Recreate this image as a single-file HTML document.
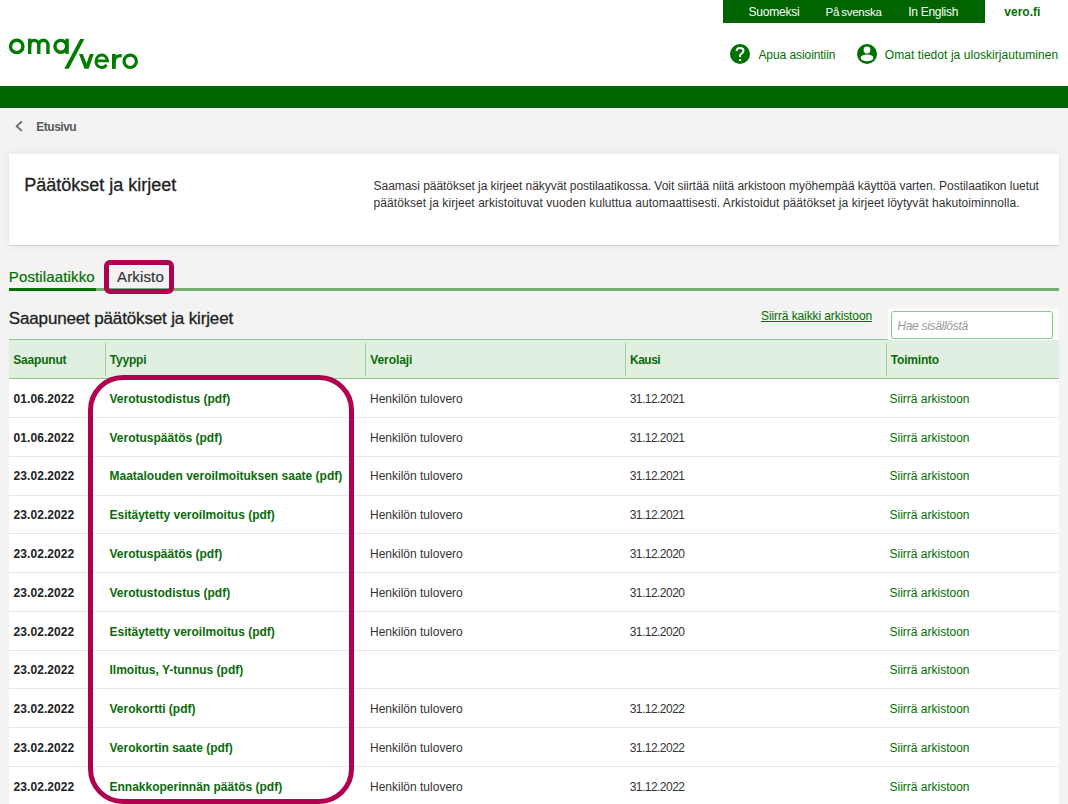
<!DOCTYPE html>
<html><head><meta charset="utf-8"><title>OmaVero</title>
<style>
html,body{margin:0;padding:0;}
body{width:1068px;height:804px;overflow:hidden;position:relative;background:#f3f3f3;font-family:"Liberation Sans",sans-serif;}
.a{position:absolute;white-space:nowrap;line-height:1;}
.b{position:absolute;}
</style></head><body>
<div class="b" style="left:0px;top:0px;width:1068px;height:86px;background:#fff;"></div>
<div class="b" style="left:723px;top:0px;width:262px;height:23px;background:#006400;"></div>
<div class="a" style="left:748.40px;top:5.94px;font-size:12px;color:#fff;letter-spacing:-0.2px;">Suomeksi</div>
<div class="a" style="left:825.50px;top:6.28px;font-size:11.6px;color:#fff;letter-spacing:-0.33px;word-spacing:-0.6px;">På svenska</div>
<div class="a" style="left:908.20px;top:5.94px;font-size:12px;color:#fff;letter-spacing:-0.28px;">In English</div>
<div class="a" style="left:1004.30px;top:5.94px;font-size:12px;color:#007000;font-weight:bold;">vero.fi</div>
<svg class="b" style="left:0;top:0" width="150" height="80" viewBox="0 0 150 80">
<g fill="none" stroke="#007a00" stroke-width="3.4">
<circle cx="16.75" cy="46.4" r="6.2"/>
<path d="M29.65 53.9 V44.9 A4.55 4.55 0 0 1 38.75 44.9 V53.9 M38.75 44.9 A4.6 4.6 0 0 1 47.95 44.9 V53.9"/>
<circle cx="60.8" cy="46.3" r="5.9"/>
<path stroke-width="2.9" d="M107.45 61.15 A5.7 6.2 0 0 0 96.05 61.15 A5.7 6.2 0 0 0 106.5 64.7 M96.05 60.9 H108.9" />
<circle stroke-width="3.2" cx="130.2" cy="61.3" r="6.2"/>
<path d="M113.9 63 C113.9 57.5 116.5 55.6 121.8 55.6"/>
</g>
<g fill="#007a00">
<rect x="27.9" y="38.7" width="3.5" height="8"/>
<rect x="65.3" y="38.7" width="3.5" height="15.2"/>
<rect x="112" y="53.9" width="3.8" height="15"/>
<polygon points="64.3,68.7 68.7,68.7 84.4,38.9 80.2,38.9"/>
<polygon points="79,53.9 82.8,53.9 86.5,63.6 89.9,53.9 93.8,53.9 88.6,68.8 84.5,68.8"/>
</g>
</svg>
<svg class="b" style="left:730px;top:44px" width="20" height="20" viewBox="0 0 20 20">
<circle cx="10" cy="10" r="10" fill="#007000"/>
<path d="M6.6 7 Q6.6 3.9 10 3.9 Q13.5 3.9 13.5 6.5 Q13.5 8.3 11.7 9.3 Q10.1 10.2 10.1 11.6 V12.9" fill="none" stroke="#fff" stroke-width="2.0"/>
<rect x="9.05" y="15.1" width="2.1" height="1.9" fill="#fff"/>
</svg>
<div class="a" style="left:758.40px;top:48.94px;font-size:12px;color:#007000;letter-spacing:-0.07px;">Apua asiointiin</div>
<svg class="b" style="left:856.5px;top:44px" width="20" height="20" viewBox="0 0 20 20">
<circle cx="10" cy="10" r="10" fill="#007000"/>
<circle cx="10" cy="6" r="3.4" fill="#fff"/>
<ellipse cx="10" cy="13.9" rx="6.4" ry="3.3" fill="#fff"/>
</svg>
<div class="a" style="left:884.80px;top:48.94px;font-size:12px;color:#007000;letter-spacing:0.06px;">Omat tiedot ja uloskirjautuminen</div>
<div class="b" style="left:0px;top:86px;width:1068px;height:22px;background:#006400;"></div>
<svg class="b" style="left:14px;top:120px" width="10" height="12" viewBox="0 0 10 12">
<path d="M7.8 1.5 L2.6 6.2 L7.8 10.9" fill="none" stroke="#666" stroke-width="1.7"/>
</svg>
<div class="a" style="left:36.30px;top:121.04px;font-size:12px;color:#5a5a5a;font-weight:bold;letter-spacing:-0.5px;">Etusivu</div>
<div class="b" style="left:9px;top:154px;width:1050px;height:91px;background:#fff;box-shadow:0 1px 1px rgba(0,0,0,0.10),0 0 10px rgba(0,0,0,0.06);"></div>
<div class="a" style="left:24.30px;top:175.56px;font-size:18px;color:#222;-webkit-text-stroke:0.3px #222;">Päätökset ja kirjeet</div>
<div class="a" style="left:373.60px;top:180.04px;font-size:12px;color:#333333;letter-spacing:-0.05px;">Saamasi päätökset ja kirjeet näkyvät postilaatikossa. Voit siirtää niitä arkistoon myöhempää käyttöä varten. Postilaatikon luetut</div>
<div class="a" style="left:373.60px;top:196.84px;font-size:12px;color:#333333;letter-spacing:0.055px;">päätökset ja kirjeet arkistoituvat vuoden kuluttua automaattisesti. Arkistoidut päätökset ja kirjeet löytyvät hakutoiminnolla.</div>
<div class="b" style="left:96px;top:288px;width:963px;height:3px;background:#74b074;"></div>
<div class="b" style="left:9px;top:288px;width:87px;height:3px;background:#007000;"></div>
<div class="a" style="left:8.80px;top:268.80px;font-size:15px;color:#007000;letter-spacing:0.14px;-webkit-text-stroke:0.2px #007000;">Postilaatikko</div>
<div class="a" style="left:117.00px;top:268.80px;font-size:15px;color:#333333;letter-spacing:0.15px;-webkit-text-stroke:0.2px #333;">Arkisto</div>
<div class="b" style="left:104px;top:260px;width:70px;height:33.6px;box-sizing:border-box;border:5px solid #b0004f;border-radius:6px;"></div>
<div class="a" style="left:8.80px;top:309.51px;font-size:17px;color:#222;letter-spacing:-0.15px;-webkit-text-stroke:0.3px #222;">Saapuneet päätökset ja kirjeet</div>
<div class="a" style="left:761.00px;top:309.84px;font-size:12px;color:#007000;letter-spacing:-0.1px;text-decoration:underline;">Siirrä kaikki arkistoon</div>
<div class="b" style="left:888px;top:308px;width:171px;height:32px;background:#fbfbfb;border-radius:4px 4px 0 0;box-shadow:0 0 2px 1px rgba(250,250,250,0.6);"></div>
<div class="b" style="left:891px;top:311px;width:162px;height:27.5px;box-sizing:border-box;border:1px solid #8cc88c;border-radius:3px;background:#fff;"></div>
<div class="a" style="left:897.30px;top:319.64px;font-size:12px;color:#999;font-style:italic;letter-spacing:-0.3px;">Hae sisällöstä</div>
<div class="b" style="left:9px;top:339px;width:879px;height:1px;background:#8cc88c;"></div>
<div class="b" style="left:9px;top:340px;width:1050px;height:38px;background:#e1efe1;"></div>
<div class="b" style="left:9px;top:378px;width:1050px;height:1px;background:#8cc88c;"></div>
<div class="b" style="left:105px;top:343px;width:1px;height:33px;background:#9ccf9c;"></div>
<div class="b" style="left:365px;top:343px;width:1px;height:33px;background:#9ccf9c;"></div>
<div class="b" style="left:625px;top:343px;width:1px;height:33px;background:#9ccf9c;"></div>
<div class="b" style="left:886px;top:343px;width:1px;height:33px;background:#9ccf9c;"></div>
<div class="a" style="left:13.30px;top:353.64px;font-size:12px;color:#0a6b0a;font-weight:bold;letter-spacing:-0.2px;">Saapunut</div>
<div class="a" style="left:109.80px;top:353.64px;font-size:12px;color:#0a6b0a;font-weight:bold;letter-spacing:-0.2px;">Tyyppi</div>
<div class="a" style="left:370.30px;top:353.64px;font-size:12px;color:#0a6b0a;font-weight:bold;letter-spacing:-0.1px;">Verolaji</div>
<div class="a" style="left:630.00px;top:353.64px;font-size:12px;color:#0a6b0a;font-weight:bold;letter-spacing:-0.5px;">Kausi</div>
<div class="a" style="left:890.80px;top:353.64px;font-size:12px;color:#0a6b0a;font-weight:bold;letter-spacing:-0.2px;">Toiminto</div>
<div class="b" style="left:9px;top:379px;width:1050px;height:425px;background:#fff;"></div>
<div class="b" style="left:9px;top:416.98px;width:1050px;height:1px;background:#e8e8e8;"></div>
<div class="a" style="left:13.50px;top:392.84px;font-size:12px;color:#222;font-weight:bold;letter-spacing:0.07px;">01.06.2022</div>
<div class="a" style="left:109.50px;top:392.84px;font-size:12px;color:#0a6b0a;font-weight:bold;">Verotustodistus (pdf)</div>
<div class="a" style="left:370.00px;top:392.84px;font-size:12px;color:#333333;">Henkilön tulovero</div>
<div class="a" style="left:629.70px;top:392.84px;font-size:12px;color:#333333;letter-spacing:-0.53px;">31.12.2021</div>
<div class="a" style="left:889.50px;top:392.84px;font-size:12px;color:#007000;">Siirrä arkistoon</div>
<div class="b" style="left:9px;top:455.76px;width:1050px;height:1px;background:#e8e8e8;"></div>
<div class="a" style="left:13.50px;top:431.62px;font-size:12px;color:#222;font-weight:bold;letter-spacing:0.07px;">01.06.2022</div>
<div class="a" style="left:109.50px;top:431.62px;font-size:12px;color:#0a6b0a;font-weight:bold;">Verotuspäätös (pdf)</div>
<div class="a" style="left:370.00px;top:431.62px;font-size:12px;color:#333333;">Henkilön tulovero</div>
<div class="a" style="left:629.70px;top:431.62px;font-size:12px;color:#333333;letter-spacing:-0.53px;">31.12.2021</div>
<div class="a" style="left:889.50px;top:431.62px;font-size:12px;color:#007000;">Siirrä arkistoon</div>
<div class="b" style="left:9px;top:494.54px;width:1050px;height:1px;background:#e8e8e8;"></div>
<div class="a" style="left:13.50px;top:470.40px;font-size:12px;color:#222;font-weight:bold;letter-spacing:0.07px;">23.02.2022</div>
<div class="a" style="left:109.50px;top:470.40px;font-size:12px;color:#0a6b0a;font-weight:bold;">Maatalouden veroilmoituksen saate (pdf)</div>
<div class="a" style="left:370.00px;top:470.40px;font-size:12px;color:#333333;">Henkilön tulovero</div>
<div class="a" style="left:629.70px;top:470.40px;font-size:12px;color:#333333;letter-spacing:-0.53px;">31.12.2021</div>
<div class="a" style="left:889.50px;top:470.40px;font-size:12px;color:#007000;">Siirrä arkistoon</div>
<div class="b" style="left:9px;top:533.32px;width:1050px;height:1px;background:#e8e8e8;"></div>
<div class="a" style="left:13.50px;top:509.18px;font-size:12px;color:#222;font-weight:bold;letter-spacing:0.07px;">23.02.2022</div>
<div class="a" style="left:109.50px;top:509.18px;font-size:12px;color:#0a6b0a;font-weight:bold;">Esitäytetty veroilmoitus (pdf)</div>
<div class="a" style="left:370.00px;top:509.18px;font-size:12px;color:#333333;">Henkilön tulovero</div>
<div class="a" style="left:629.70px;top:509.18px;font-size:12px;color:#333333;letter-spacing:-0.53px;">31.12.2021</div>
<div class="a" style="left:889.50px;top:509.18px;font-size:12px;color:#007000;">Siirrä arkistoon</div>
<div class="b" style="left:9px;top:572.10px;width:1050px;height:1px;background:#e8e8e8;"></div>
<div class="a" style="left:13.50px;top:547.96px;font-size:12px;color:#222;font-weight:bold;letter-spacing:0.07px;">23.02.2022</div>
<div class="a" style="left:109.50px;top:547.96px;font-size:12px;color:#0a6b0a;font-weight:bold;">Verotuspäätös (pdf)</div>
<div class="a" style="left:370.00px;top:547.96px;font-size:12px;color:#333333;">Henkilön tulovero</div>
<div class="a" style="left:629.70px;top:547.96px;font-size:12px;color:#333333;letter-spacing:-0.53px;">31.12.2020</div>
<div class="a" style="left:889.50px;top:547.96px;font-size:12px;color:#007000;">Siirrä arkistoon</div>
<div class="b" style="left:9px;top:610.88px;width:1050px;height:1px;background:#e8e8e8;"></div>
<div class="a" style="left:13.50px;top:586.74px;font-size:12px;color:#222;font-weight:bold;letter-spacing:0.07px;">23.02.2022</div>
<div class="a" style="left:109.50px;top:586.74px;font-size:12px;color:#0a6b0a;font-weight:bold;">Verotustodistus (pdf)</div>
<div class="a" style="left:370.00px;top:586.74px;font-size:12px;color:#333333;">Henkilön tulovero</div>
<div class="a" style="left:629.70px;top:586.74px;font-size:12px;color:#333333;letter-spacing:-0.53px;">31.12.2020</div>
<div class="a" style="left:889.50px;top:586.74px;font-size:12px;color:#007000;">Siirrä arkistoon</div>
<div class="b" style="left:9px;top:649.66px;width:1050px;height:1px;background:#e8e8e8;"></div>
<div class="a" style="left:13.50px;top:625.52px;font-size:12px;color:#222;font-weight:bold;letter-spacing:0.07px;">23.02.2022</div>
<div class="a" style="left:109.50px;top:625.52px;font-size:12px;color:#0a6b0a;font-weight:bold;">Esitäytetty veroilmoitus (pdf)</div>
<div class="a" style="left:370.00px;top:625.52px;font-size:12px;color:#333333;">Henkilön tulovero</div>
<div class="a" style="left:629.70px;top:625.52px;font-size:12px;color:#333333;letter-spacing:-0.53px;">31.12.2020</div>
<div class="a" style="left:889.50px;top:625.52px;font-size:12px;color:#007000;">Siirrä arkistoon</div>
<div class="b" style="left:9px;top:688.44px;width:1050px;height:1px;background:#e8e8e8;"></div>
<div class="a" style="left:13.50px;top:664.30px;font-size:12px;color:#222;font-weight:bold;letter-spacing:0.07px;">23.02.2022</div>
<div class="a" style="left:109.50px;top:664.30px;font-size:12px;color:#0a6b0a;font-weight:bold;">Ilmoitus, Y-tunnus (pdf)</div>
<div class="a" style="left:889.50px;top:664.30px;font-size:12px;color:#007000;">Siirrä arkistoon</div>
<div class="b" style="left:9px;top:727.22px;width:1050px;height:1px;background:#e8e8e8;"></div>
<div class="a" style="left:13.50px;top:703.08px;font-size:12px;color:#222;font-weight:bold;letter-spacing:0.07px;">23.02.2022</div>
<div class="a" style="left:109.50px;top:703.08px;font-size:12px;color:#0a6b0a;font-weight:bold;">Verokortti (pdf)</div>
<div class="a" style="left:370.00px;top:703.08px;font-size:12px;color:#333333;">Henkilön tulovero</div>
<div class="a" style="left:629.70px;top:703.08px;font-size:12px;color:#333333;letter-spacing:-0.53px;">31.12.2022</div>
<div class="a" style="left:889.50px;top:703.08px;font-size:12px;color:#007000;">Siirrä arkistoon</div>
<div class="b" style="left:9px;top:766.00px;width:1050px;height:1px;background:#e8e8e8;"></div>
<div class="a" style="left:13.50px;top:741.86px;font-size:12px;color:#222;font-weight:bold;letter-spacing:0.07px;">23.02.2022</div>
<div class="a" style="left:109.50px;top:741.86px;font-size:12px;color:#0a6b0a;font-weight:bold;">Verokortin saate (pdf)</div>
<div class="a" style="left:370.00px;top:741.86px;font-size:12px;color:#333333;">Henkilön tulovero</div>
<div class="a" style="left:629.70px;top:741.86px;font-size:12px;color:#333333;letter-spacing:-0.53px;">31.12.2022</div>
<div class="a" style="left:889.50px;top:741.86px;font-size:12px;color:#007000;">Siirrä arkistoon</div>
<div class="b" style="left:9px;top:804.78px;width:1050px;height:1px;background:#e8e8e8;"></div>
<div class="a" style="left:13.50px;top:780.64px;font-size:12px;color:#222;font-weight:bold;letter-spacing:0.07px;">23.02.2022</div>
<div class="a" style="left:109.50px;top:780.64px;font-size:12px;color:#0a6b0a;font-weight:bold;">Ennakkoperinnän päätös (pdf)</div>
<div class="a" style="left:370.00px;top:780.64px;font-size:12px;color:#333333;">Henkilön tulovero</div>
<div class="a" style="left:629.70px;top:780.64px;font-size:12px;color:#333333;letter-spacing:-0.53px;">31.12.2022</div>
<div class="a" style="left:889.50px;top:780.64px;font-size:12px;color:#007000;">Siirrä arkistoon</div>
<div class="b" style="left:88px;top:375px;width:266px;height:428.5px;box-sizing:border-box;border:5px solid #b0004f;border-radius:35px;"></div>
</body></html>
